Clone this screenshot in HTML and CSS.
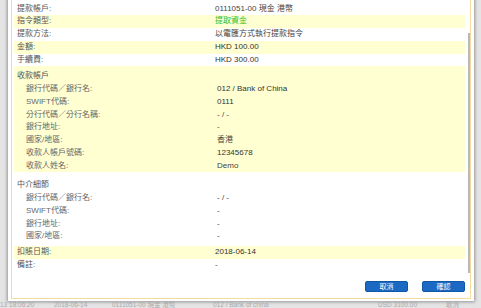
FILE: index.html
```html
<!DOCTYPE html>
<html lang="zh-Hant">
<head>
    <meta charset="UTF-8">
    <meta name="viewport" content="width=device-width, initial-scale=1.0">
    <title>提款指令確認</title>
    <link rel="stylesheet" href="styles.css">
</head>
<body>
    <div class="dialog">
        <div class="dialog-inner">
            <div class="scroll-thumb"></div>
            <div class="detail">
                <div class="row"><span class="label">提款帳戶:</span><span class="value">0111051-00 現金 港幣</span></div>
                <div class="row alt"><span class="label">指令類型:</span><span class="value green">提取資金</span></div>
                <div class="row"><span class="label">提款方法:</span><span class="value">以電匯方式執行提款指令</span></div>
                <div class="row alt"><span class="label">金額:</span><span class="value strong">HKD 100.00</span></div>
                <div class="row"><span class="label">手續費:</span><span class="value strong">HKD 300.00</span></div>

                <!-- 收款帳戶 -->
                <div class="section first alt">
                    <div class="section-title">收款帳戶</div>
                    <div class="row sub"><span class="label">銀行代碼／銀行名:</span><span class="value strong">012 / Bank of China</span></div>
                    <div class="row sub"><span class="label">SWIFT代碼:</span><span class="value strong">0111</span></div>
                    <div class="row sub"><span class="label">分行代碼／分行名稱:</span><span class="value">- / -</span></div>
                    <div class="row sub"><span class="label">銀行地址:</span><span class="value">-</span></div>
                    <div class="row sub"><span class="label">國家/地區:</span><span class="value">香港</span></div>
                    <div class="row sub"><span class="label">收款人帳戶號碼:</span><span class="value strong">12345678</span></div>
                    <div class="row sub"><span class="label">收款人姓名:</span><span class="value">Demo</span></div>
                </div>

                <!-- 中介細節 -->
                <div class="section second">
                    <div class="section-title">中介細節</div>
                    <div class="row sub"><span class="label">銀行代碼／銀行名:</span><span class="value">- / -</span></div>
                    <div class="row sub"><span class="label">SWIFT代碼:</span><span class="value">-</span></div>
                    <div class="row sub"><span class="label">銀行地址:</span><span class="value">-</span></div>
                    <div class="row sub"><span class="label">國家/地區:</span><span class="value">-</span></div>
                </div>

                <div class="row alt"><span class="label">扣賬日期:</span><span class="value strong">2018-06-14</span></div>
                <div class="row"><span class="label">備註:</span><span class="value">-</span></div>
            </div>

            <div class="actions">
                <button class="btn">取消</button>
                <button class="btn">確認</button>
            </div>
        </div>
    </div>

    <div class="page-row">
        <span class="c1">13 18:06:20</span>
        <span class="c2">2018-06-14</span>
        <span class="c3">0111051-00 現金 港幣</span>
        <span class="c4">012 / Bank of china</span>
        <span class="c5">USD 3100.00</span>
        <span class="c6">取消</span>
    </div>
</body>
</html>
```

FILE: styles.css
```css
body { margin: 0; background: #e4e4e4; font-family: "Liberation Sans", "Noto Sans CJK TC", sans-serif; font-size: 8px; color: #444; overflow: hidden; }

.dialog { width: 460px; margin: -4px 0 0 8px; padding: 3px 3px 2px 3px; background: #fff; box-shadow: 0 0 3px 1px rgba(0,0,0,.35); }
.dialog-inner { position: relative; border: 1px solid #f3dc9c; }
.scroll-thumb { position: absolute; right: 0; top: 33px; width: 2px; height: 240px; background: #b9b9b9; }

.detail { width: 451px; margin-left: 2px; padding-top: 2.5px; }
.row { display: grid; grid-template-columns: 201px 1fr; height: 12.75px; line-height: 12.75px; white-space: nowrap; }
.row .label { padding-left: 3px; color: #555; }
.row .value { color: #444; }
.row.sub { grid-template-columns: 203px 1fr; }
.row.sub .label { padding-left: 12px; color: #666; }
.value.strong { color: #333; font-weight: 500; }
.value.green { color: #2fbf2f; }
.alt { background: #ffffd2; }

.section-title { height: 12.75px; line-height: 12.75px; padding-left: 3px; color: #555; }
.section.first { padding-top: 4px; }
.section.second { padding-top: 7px; padding-bottom: 3px; }

.actions { display: flex; justify-content: flex-end; gap: 14px; padding: 9.5px 5px 6px 0; }
.btn { width: 43px; height: 11px; padding: 0; border: 1px solid #0f58a8; border-radius: 2px; background: #1b69c2; color: #fff; font-family: inherit; font-size: 7px; line-height: 9px; }

.page-row { position: relative; height: 7px; margin-top: 0; color: #aaa; font-size: 6.5px; line-height: 7px; white-space: nowrap; }
.page-row span { position: absolute; top: 0; }
.page-row .c1 { left: 0; }
.page-row .c2 { left: 54px; }
.page-row .c3 { left: 112px; }
.page-row .c4 { left: 213px; }
.page-row .c5 { left: 378px; }
.page-row .c6 { left: 446px; }
```
